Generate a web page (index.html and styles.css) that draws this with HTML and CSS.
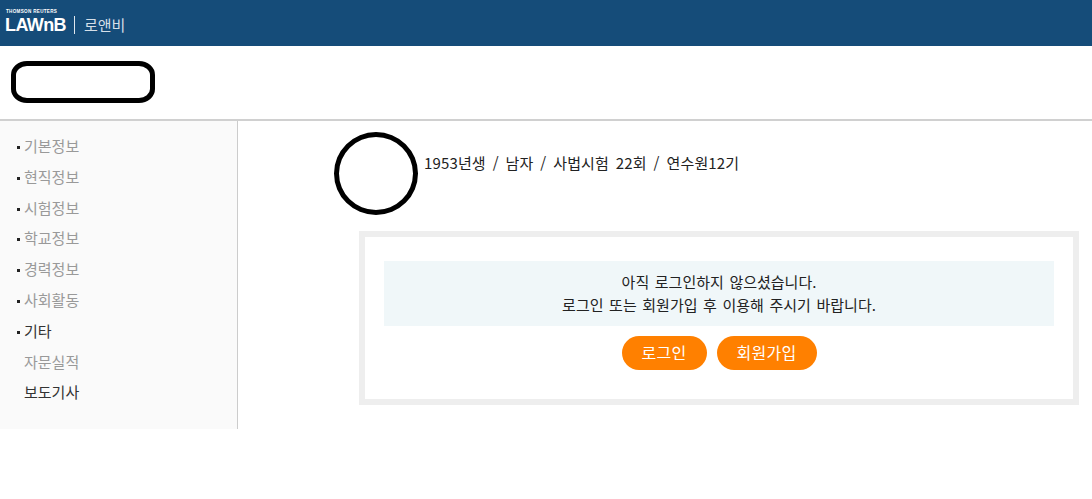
FILE: index.html
```html
<!DOCTYPE html>
<html lang="ko">
<head>
  <meta charset="UTF-8" />
  <meta name="viewport" content="width=device-width, initial-scale=1.0"/>
  <title>로앤비</title>
  <link rel="stylesheet" href="styles.css">
</head>
<body>

<div class="header">
  <div class="logo">
    <div class="logo-small">THOMSON REUTERS</div>
    <div class="logo-big">LAWnB</div>
  </div>
  <div class="logo-name">로앤비</div>
</div>

<div class="namebar">
  <div class="name-mark"></div>
</div>

<div class="main">
  <ul class="side">
    <li class="dot">기본정보</li>
    <li class="dot">현직정보</li>
    <li class="dot">시험정보</li>
    <li class="dot">학교정보</li>
    <li class="dot">경력정보</li>
    <li class="dot">사회활동</li>
    <li class="dot dark">기타</li>
    <li>자문실적</li>
    <li class="dark">보도기사</li>
  </ul>

  <div class="content">
    <div class="profile">
      <div class="photo"></div>
      <div class="profile-text">1953년생 / 남자 / 사법시험 22회 / 연수원12기</div>
    </div>

    <div class="box">
      <div class="notice">
        아직 로그인하지 않으셨습니다.<br>
        로그인 또는 회원가입 후 이용해 주시기 바랍니다.
      </div>
      <div class="buttons">
        <a class="btn btn-login" href="#">로그인</a>
        <a class="btn btn-join" href="#">회원가입</a>
      </div>
    </div>
  </div>
</div>

</body>
</html>
```

FILE: styles.css
```css
body {
  font-family: "Noto Sans CJK KR", "Liberation Sans", sans-serif;
  background: #fff;
  margin: 0;
  padding: 0;
  color: #222;
}
.header {
  height: 46px;
  background: #154c79;
  display: flex;
  align-items: center;
  padding-left: 5px;
  box-sizing: border-box;
}
.logo {
  color: #fff;
  font-family: "Liberation Sans", sans-serif;
  padding-right: 8px;
  margin-top: -3px;
}
.logo-small {
  font-size: 4.6px;
  font-weight: bold;
  line-height: 5px;
  letter-spacing: 0.3px;
  padding-left: 1px;
}
.logo-big {
  font-size: 18px;
  line-height: 20px;
  margin-top: 1px;
  font-weight: bold;
  letter-spacing: -0.6px;
}
.logo-name {
  border-left: 1px solid #dfe7ee;
  height: 18px;
  line-height: 18px;
  padding-left: 9px;
  font-size: 15px;
  color: #d5dfe8;
  margin-top: 3px;
}
.namebar {
  height: 57px;
  border-bottom: 2px solid #d0d0d0;
  padding: 16px 0 0 11px;
}
.name-mark {
  width: 144px;
  height: 42px;
  box-sizing: border-box;
  border: 5px solid #000;
  border-radius: 16px / 14px;
  margin-top: -1px;
}
.main {
  display: flex;
  align-items: flex-start;
}
.side {
  list-style: none;
  margin: 0;
  padding: 10px 0 21px 24px;
  width: 213px;
  background: #fafafa;
  border-right: 1px solid #ccc;
  font-size: 15px;
  color: #999;
}
.side li {
  height: 30.8px;
  line-height: 30px;
  position: relative;
}
.side .dark {
  color: #333;
}
.dot::before {
  content: "";
  position: absolute;
  left: -7px;
  top: 15px;
  width: 3px;
  height: 3px;
  background: #222;
}
.content {
  flex: 1;
  padding: 11px 13px 0 96px;
}
.profile {
  display: flex;
  align-items: flex-start;
}
.photo {
  width: 84px;
  height: 83px;
  flex-shrink: 0;
  box-sizing: border-box;
  border: 5px solid #000;
  border-radius: 50%;
}
.profile-text {
  margin: 20px 0 0 6px;
  font-size: 15px;
  letter-spacing: 0.15px;
  word-spacing: 2.5px;
  line-height: 22px;
  color: #222;
}
.box {
  margin: 16px 0 0 25px;
  border: 6px solid #eee;
  padding: 24px 19px 29px;
  height: 174px;
  box-sizing: border-box;
}
.notice {
  background: #f0f7f9;
  height: 65px;
  padding-top: 9px;
  box-sizing: border-box;
  text-align: center;
  font-size: 15px;
  word-spacing: 1.4px;
  line-height: 23px;
  color: #222;
}
.buttons {
  display: flex;
  justify-content: center;
  gap: 10px;
  margin-top: 10px;
}
.btn {
  height: 34px;
  line-height: 33px;
  border-radius: 17px;
  background: #ff8000;
  color: #fff;
  text-align: center;
  font-size: 16px;
  letter-spacing: 0.3px;
  text-decoration: none;
}
.btn-login {
  width: 85px;
}
.btn-join {
  width: 100px;
}
```
